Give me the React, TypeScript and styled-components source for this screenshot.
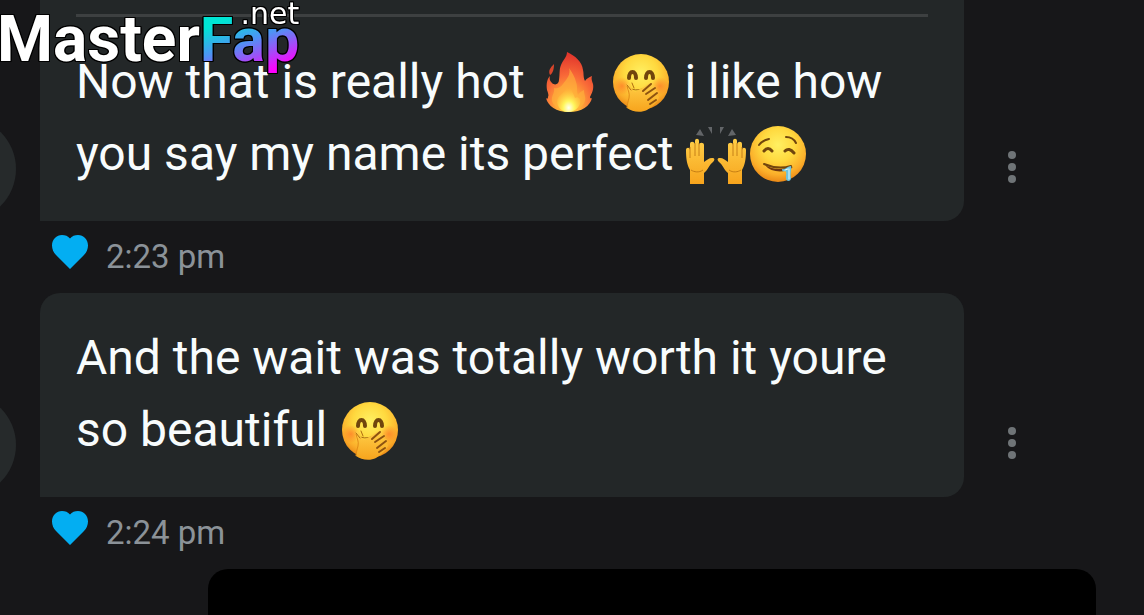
import React from "react";
import styled, { createGlobalStyle } from "styled-components";

const GlobalStyle = createGlobalStyle`
  *, *::before, *::after { box-sizing: border-box; }
  body {
    margin: 0;
    background: #171719;
    font-family: Roboto, "Liberation Sans", sans-serif;
  }
`;

const Page = styled.div`
  position: relative;
  display: flex;
  flex-direction: column;
  height: 100vh;
  overflow: hidden;
`;

const Brand = styled.a`
  position: absolute;
  top: 0;
  left: 0;
  z-index: 2;
  color: #fff;
  text-decoration: none;
  filter: drop-shadow(1px 0 0 #000) drop-shadow(-1px 0 0 #000)
    drop-shadow(0 1px 0 #000) drop-shadow(0 -1px 0 #000);
`;

const BrandName = styled.span`
  display: block;
  padding-top: 4px;
  margin-left: -3px;
  font: 700 64px/72px Roboto, sans-serif;
  white-space: nowrap;
`;

const BrandAccent = styled.span`
  display: inline-block;
  background: linear-gradient(160deg, #00e5d4 24%, #4d94f4 50%, #a34df8 68%, #ff00ff 86%);
  background-clip: text;
  -webkit-background-clip: text;
  color: transparent;
  font-size: 61px;
`;

const BrandSuffix = styled.span`
  position: absolute;
  top: 0;
  right: 0;
  font: 400 30px/28px "DejaVu Sans", sans-serif;
`;

const Thread = styled.main`
  display: flex;
  flex: 1;
  flex-direction: column;
`;

const MessageRow = styled.article`
  display: flex;
  align-items: flex-end;
  padding-right: 84px;
  margin-left: -88px;
`;

const Avatar = styled.div`
  flex: none;
  width: 104px;
  height: 104px;
  margin-right: 24px;
  border-radius: 50%;
  background: #262a2b;
`;

const Bubble = styled.div<{ $continued?: boolean }>`
  flex: 1;
  min-width: 0;
  padding: ${(p) => (p.$continued ? "14px" : "0")} 36px 31px;
  border-radius: ${(p) => (p.$continued ? "0 0 20px 0" : "20px 20px 20px 0")};
  background: #232728;
`;

const Divider = styled.hr`
  height: 3px;
  margin: 0;
  border: 0;
  background: #3d4041;
`;

const MessageText = styled.p`
  margin: 0;
  padding-top: 29px;
  color: #f8fcfd;
  font-size: 48px;
  line-height: 72px;
`;

const MenuButton = styled.button`
  display: flex;
  flex: none;
  flex-direction: column;
  align-items: center;
  justify-content: center;
  gap: 4px;
  width: 96px;
  height: 108px;
  padding: 0;
  border: 0;
  background: none;
`;

const Dot = styled.span`
  width: 8px;
  height: 8px;
  border-radius: 50%;
  background: #6f7477;
`;

const MetaRow = styled.div`
  display: flex;
  align-items: center;
  gap: 18px;
  height: 72px;
  padding-left: 52px;
`;

const LikeButton = styled.button`
  display: flex;
  padding: 0 0 10px;
  border: 0;
  background: none;
`;

const Time = styled.time`
  color: #8b9298;
  font-size: 33px;
  line-height: 40px;
`;

const OutgoingBubble = styled.div`
  flex: 1;
  min-height: 46px;
  margin: 0 48px 0 208px;
  border-radius: 20px 20px 0 0;
  background: #000;
`;

const EmojiSvg = styled.svg`
  width: 62px;
  height: 62px;
  vertical-align: -15px;
`;

const GradientDefs = styled.svg`
  position: absolute;
  width: 0;
  height: 0;
`;

const Gradients = () => (
  <GradientDefs aria-hidden="true">
    <defs>
      <radialGradient id="face" cx="50%" cy="34%" r="66%">
        <stop offset="0" stopColor="#fff062" />
        <stop offset=".45" stopColor="#ffd93f" />
        <stop offset=".8" stopColor="#fbae2a" />
        <stop offset="1" stopColor="#ea8816" />
      </radialGradient>
      <radialGradient id="blush">
        <stop offset="0" stopColor="#ff6a24" stopOpacity=".6" />
        <stop offset="1" stopColor="#ff6a24" stopOpacity="0" />
      </radialGradient>
      <linearGradient id="hand" x1="0" y1="0" x2="0" y2="1">
        <stop offset="0" stopColor="#ffcf48" />
        <stop offset="1" stopColor="#f7a41d" />
      </linearGradient>
      <radialGradient id="flame" cx="48%" cy="92%" r="88%">
        <stop offset="0" stopColor="#ffe04a" />
        <stop offset=".3" stopColor="#ffa838" />
        <stop offset=".6" stopColor="#f96a38" />
        <stop offset="1" stopColor="#e2362c" />
      </radialGradient>
      <radialGradient id="core" cx="50%" cy="85%" r="70%">
        <stop offset="0" stopColor="#fffff0" />
        <stop offset=".35" stopColor="#fff65c" />
        <stop offset="1" stopColor="#ffc23c" stopOpacity="0" />
      </radialGradient>
    </defs>
  </GradientDefs>
);

const Fire = () => (
  <EmojiSvg viewBox="0 0 62 62" role="img" aria-label="fire">
    <path
      d="M30 1c0 5-4 8-6 13-2 5-1 9-2 15 0 4-4 6-7 3-2-2-3-4-2-7-3 3-4 8-3 14 1 3 2 5 1 7 0 2-1 2-2 1 2 8 10 14 23 14s21-6 23-14c-1 1-2 0-2-1 2-4 4-8 3-13-1-3-2-5-1-8-3 1-6 3-7 5-2-4-1-7-2-11-1-9-8-14-16-18Z"
      fill="url(#flame)"
    />
    <path d="M17 13c-4 4-6 7-4 11 3-2 4-6 4-11Z" fill="#d8452b" />
    <path
      d="M32 17c2 6-2 11-6 16-3 4-6 5-9 4 1 5-3 8-2 13 2 6 8 10 16 10s15-4 17-10c1-4-1-6-1-11-3 1-5 3-6 5-2-4 0-8-2-13-1-5-4-10-7-14Z"
      fill="#ffb43c"
      opacity=".6"
    />
    <path
      d="M31 33c1 6-7 9-10 14-3 6 2 14 10 14s14-7 12-13c-2-2-3-2-5-1-2-5-4-10-7-14Z"
      fill="url(#core)"
    />
  </EmojiSvg>
);

const HandOverMouth = () => (
  <EmojiSvg viewBox="0 0 62 62" role="img" aria-label="face with hand over mouth">
    <circle cx="31" cy="31" r="28" fill="url(#face)" />
    <circle cx="12" cy="35" r="9" fill="url(#blush)" />
    <circle cx="50" cy="35" r="9" fill="url(#blush)" />
    <g fill="none" stroke="#70450d" strokeWidth="4" strokeLinecap="round">
      <path d="M19 27c0-8 7-8 7 0" />
      <path d="M36 27c0-8 7-8 7 0" />
    </g>
    <path d="M21 38q9 3 17-3" fill="none" stroke="#a96d14" strokeWidth="1" strokeLinecap="round" />
    <path
      d="M17 57c1-6 2-9 1-14-1-3-2-7-1-10 2-2 4 1 5 5l3 3c6-3 11-7 15-9 3-1 4 1 2 4 3-1 5 1 3 4 3-1 4 2 1 5 3-1 4 2 1 5-3 4-6 6-10 9-6 3-15 2-20-2Z"
      fill="url(#hand)"
    />
    <path d="M17 35c1 5 3 7 2 12-1 4-2 7-2 10" fill="none" stroke="#e18b16" strokeWidth="1" />
    <path
      d="M33 40l8-7M36 43l9-6M38 49l9-7M40 53l6-4"
      fill="none"
      stroke="#8d5210"
      strokeWidth="2"
      strokeLinecap="round"
    />
    <path d="M17 34l4 5M24 37l-2-5" stroke="#b06c12" strokeWidth="1" strokeLinecap="round" />
  </EmojiSvg>
);

const Hand = () => (
  <>
    <path
      d="M5 61V47C2 42 1 36 1 27c0-3 4-3 4 0V21c0-3 4-3 5 0V18c0-3 4-3 4 0v4c0-3 5-3 5 0v17c3-2 5-4 8-4 3 0 3 2 1 4-4 3-5 8-9 11v11Z"
      fill="url(#hand)"
    />
    <path
      d="M5 24v11M10 20v13M14 20v13M6 47c3 2 8 3 12 0"
      fill="none"
      stroke="#b9720f"
      strokeWidth="1"
      opacity=".8"
    />
  </>
);

const RaisedHands = () => (
  <EmojiSvg viewBox="0 0 62 62" role="img" aria-label="raising hands">
    <Hand />
    <g transform="matrix(-1 0 0 1 62 0)">
      <Hand />
    </g>
    <path d="M15 6l-4 6 8 1ZM23 4l4 0 0 7ZM39 4l-4 0 0 7ZM47 6l4 6-8 1Z" fill="#626568" />
  </EmojiSvg>
);

const Drooling = () => (
  <EmojiSvg viewBox="0 0 62 62" role="img" aria-label="drooling face">
    <circle cx="31" cy="31" r="28" fill="url(#face)" />
    <g fill="none" stroke="#70450d" strokeLinecap="round">
      <path d="M12 22q4-5 10-6M39 14q7 0 10 6" strokeWidth="2" />
      <path d="M17 28q4-5 8 0M38 28q4-4 9 2" strokeWidth="3" />
    </g>
    <path d="M18 42c9 5 17 5 26 1 1 0 2 1 1 2-7 5-21 5-27-3Z" fill="#6e3610" />
    <path d="M17 41q14 6 27 2" fill="none" stroke="#70450d" strokeWidth="2" strokeLinecap="round" />
    <path d="M35 46c3 1 6-3 9-3 1 3-1 6 0 12 0 4-5 4-5 0 0-4 1-6-1-7-2 1-3 0-3-2Z" fill="#6cc4de" />
    <path d="M42 46v10M38 47l3-1" stroke="#e5faff" strokeWidth="1" strokeLinecap="round" />
  </EmojiSvg>
);

const Heart = () => (
  <svg width="36" height="34" viewBox="0 0 36 34" aria-hidden="true">
    <path
      d="M18 34 4 20C1.500 17.500 0 14 0 10.500 0 4.500 4.500 0 10 0c3.200 0 6 1.200 8 3.400C20 1.200 22.800 0 26 0c5.500 0 10 4.500 10 10.500 0 3.500-1.500 7-4 9.500Z"
      fill="#03aef2"
    />
  </svg>
);

const MessageMenu = () => (
  <MenuButton type="button" aria-label="Message options">
    <Dot />
    <Dot />
    <Dot />
  </MenuButton>
);

const Meta = ({ time, dateTime }: { time: string; dateTime: string }) => (
  <MetaRow>
    <LikeButton type="button" aria-label="Liked">
      <Heart />
    </LikeButton>
    <Time dateTime={dateTime}>{time}</Time>
  </MetaRow>
);

export default function App() {
  return (
    <Page>
      <GlobalStyle />
      <Gradients />
      <Brand href="#">
        <BrandName>
          Master<BrandAccent>Fap</BrandAccent>
        </BrandName>
        <BrandSuffix>.net</BrandSuffix>
      </Brand>
      <Thread>
        <MessageRow>
          <Avatar />
          <Bubble $continued>
            <Divider />
            <MessageText>
              Now that is really hot <Fire /> <HandOverMouth /> i like how you say my name its
              perfect <RaisedHands />
              <Drooling />
            </MessageText>
          </Bubble>
          <MessageMenu />
        </MessageRow>
        <Meta time="2:23 pm" dateTime="14:23" />
        <MessageRow>
          <Avatar />
          <Bubble>
            <MessageText>
              And the wait was totally worth it youre so beautiful <HandOverMouth />
            </MessageText>
          </Bubble>
          <MessageMenu />
        </MessageRow>
        <Meta time="2:24 pm" dateTime="14:24" />
        <OutgoingBubble />
      </Thread>
    </Page>
  );
}
